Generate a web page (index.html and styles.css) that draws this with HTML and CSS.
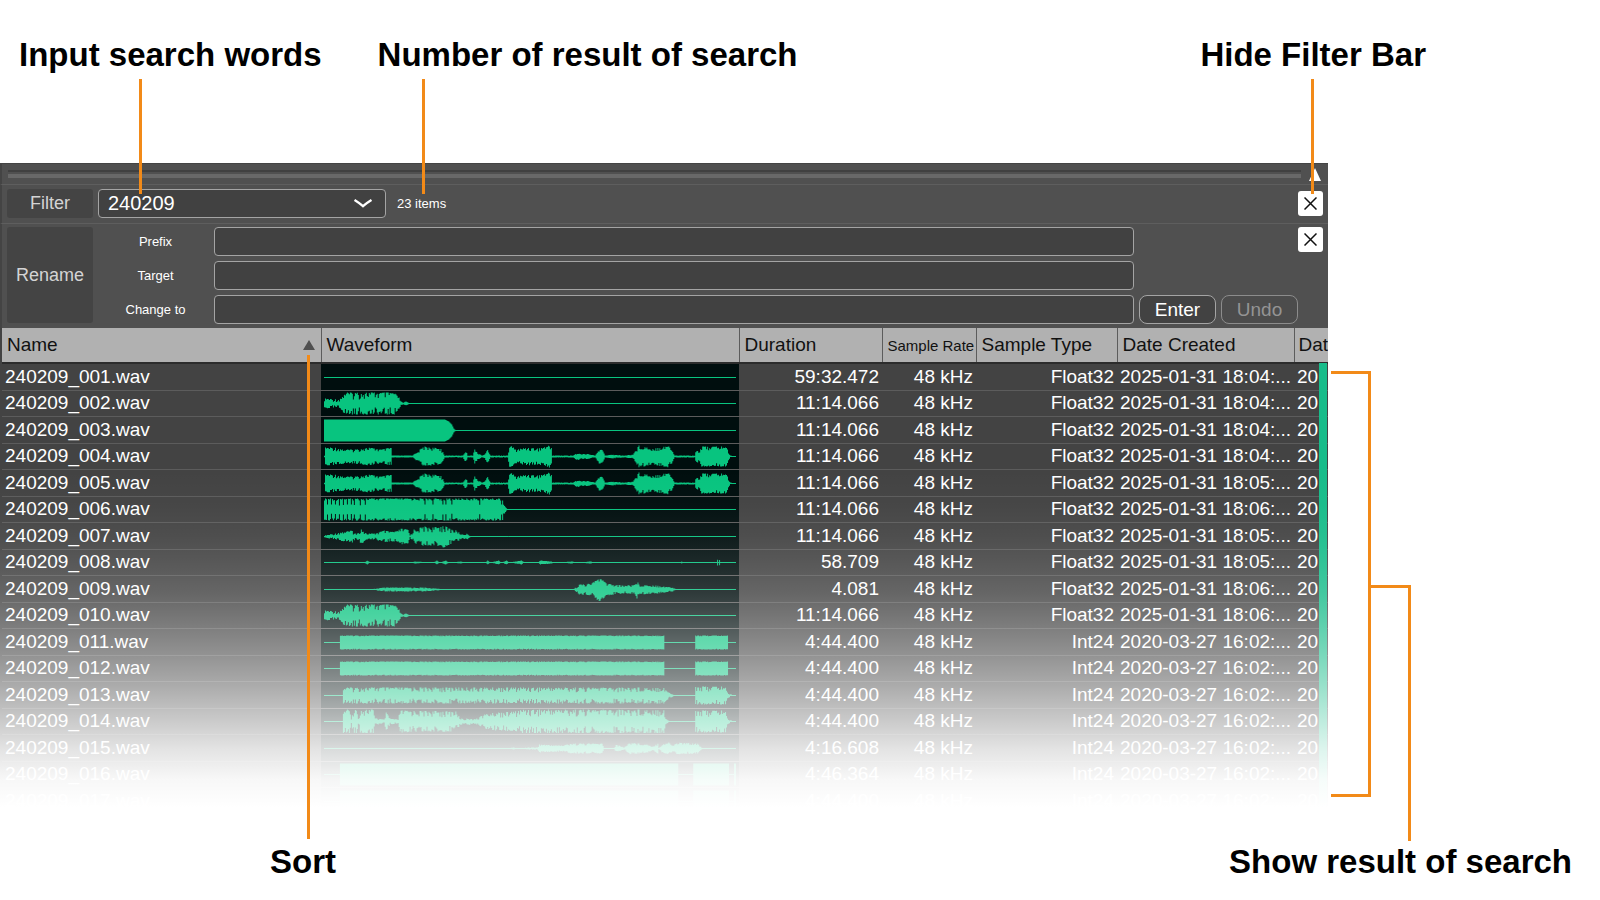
FILE: index.html
```html
<!DOCTYPE html>
<html lang="en">
<head>
  <meta charset="UTF-8">
  <title>Filter Bar</title>
  <link rel="stylesheet" href="styles.css">
</head>
<body>

  <main class="guide">

    <!-- Top callouts -->
    <div class="callouts-top">
      <div class="callout callout-input">Input search words</div>
      <div class="callout callout-count">Number of result of search</div>
      <div class="callout callout-hide">Hide Filter Bar</div>
    </div>

    <!-- Application window -->
    <section class="app">
      <div class="splitter">
        <div class="grip"></div>
        <svg class="collapse" viewBox="0 0 12 13"><path d="M6 0 L12 13 H0 Z" fill="#fff"/></svg>
      </div>

      <form class="filter-bar">
        <label class="tile" for="filter">Filter</label>
        <div class="combo">
          <input type="text" id="filter" value="240209">
          <button type="button" class="combo-btn" aria-label="Show history">
            <svg viewBox="0 0 18 9"><path d="M0.500 1 C4 3.200 6.500 5 9 7.200 C11.500 5 14 3.200 17.500 1" fill="none" stroke="#fff" stroke-width="2.400"/></svg>
          </button>
        </div>
        <output class="count" for="filter">23 items</output>
        <button type="button" class="close" aria-label="Hide filter bar">
          <svg viewBox="0 0 13 13"><path d="M0.500 0.500 L12.500 12.500 M12.500 0.500 L0.500 12.500" stroke="#111" stroke-width="1.500"/></svg>
        </button>
      </form>

      <form class="rename-bar">
        <div class="tile">Rename</div>
        <div class="fields">
          <label for="prefix">Prefix</label>
          <input type="text" id="prefix">
          <label for="target">Target</label>
          <input type="text" id="target">
          <label for="change">Change to</label>
          <input type="text" id="change">
        </div>
        <div class="actions">
          <button type="button" class="btn">Enter</button>
          <button type="button" class="btn" disabled>Undo</button>
        </div>
        <button type="button" class="close" aria-label="Hide rename bar">
          <svg viewBox="0 0 13 13"><path d="M0.500 0.500 L12.500 12.500 M12.500 0.500 L0.500 12.500" stroke="#111" stroke-width="1.500"/></svg>
        </button>
      </form>

      <div class="list">
        <table>
          <colgroup>
            <col class="col-name">
            <col>
            <col class="col-duration">
            <col class="col-rate">
            <col class="col-type">
            <col class="col-created">
            <col class="col-modified">
          </colgroup>
          <thead>
            <tr>
              <th><button type="button" class="sort">Name <svg viewBox="0 0 12 10"><path d="M6 0 L12 10 H0 Z" fill="#505050"/></svg></button></th>
              <th>Waveform</th>
              <th>Duration</th>
              <th class="narrow">Sample Rate</th>
              <th>Sample Type</th>
              <th>Date Created</th>
              <th>Dat</th>
            </tr>
          </thead>
          <tbody id="files"></tbody>
        </table>
        <div class="scrollbar"></div>
        <div class="fade"></div>
      </div>
    </section>

    <!-- Bracket beside the results -->
    <div class="results">
      <div class="bracket"></div>
      <div class="stem"></div>
    </div>

    <!-- Bottom callouts -->
    <div class="callouts-bottom">
      <div class="callout callout-sort">Sort</div>
      <div class="callout">Show result of search</div>
    </div>

  </main>

  <script src="script.js"></script>
</body>
</html>
```

FILE: styles.css
```css
* {
  box-sizing: border-box;
}

body {
  margin: 0;
  background-color: #ffffff;
  color: #000000;
  font-family: "Liberation Sans", Arial, sans-serif;
  font-size: 19px;
}

input,
button {
  font-family: inherit;
  font-size: inherit;
}

.guide {
  display: grid;
  grid-template-columns: minmax(0, 1fr) 272px;
}

/* Callouts */
.callouts-top,
.callouts-bottom {
  grid-column: 1 / -1;
  display: flex;
  font-size: 33px;
  font-weight: bold;
  line-height: 38px;
}

.callouts-top {
  gap: 56px;
  padding: 36px 174px 89px 19px;
}

.callouts-bottom {
  justify-content: space-between;
  padding: 29px 28px 0 270px;
}

.callout {
  position: relative;
  white-space: nowrap;
}

.callout-hide {
  margin-left: auto;
}

.callout-input::after,
.callout-count::after,
.callout-hide::after,
.callout-sort::after {
  content: "";
  position: absolute;
  z-index: 2;
  top: 43px;
  width: 3px;
  height: 115px;
  background-color: #f28a18;
}

.callout-input::after {
  left: 120px;
}

.callout-count::after {
  left: 44px;
}

.callout-hide::after {
  right: 112px;
}

.callout-sort::after {
  top: auto;
  bottom: 42px;
  left: 37px;
  height: 484px;
}

.results {
  display: flex;
  padding-left: 3px;
}

.bracket {
  width: 40px;
  margin: 208px 0 17px;
  border: 3px solid #f28a18;
  border-left: none;
}

.stem {
  width: 40px;
  margin: 422px 0 -27px;
  border-top: 3px solid #f28a18;
  border-right: 3px solid #f28a18;
}

/* App window */
.splitter,
.filter-bar,
.rename-bar {
  border-left: 2px solid #444444;
  background-color: #505050;
}

.splitter {
  display: flex;
  align-items: center;
  gap: 8px;
  height: 21px;
  padding: 0 7px 0 6px;
  border-top: 1px solid #444444;
}

.grip {
  flex: 1;
  height: 8px;
  border-top: 2px solid #404040;
  border-bottom: 4px solid #686868;
}

.collapse {
  width: 12px;
  height: 13px;
}

.filter-bar {
  display: flex;
  align-items: center;
  height: 39px;
  padding: 0 5px 2px;
  border-top: 1px solid #5e5e5e;
}

.tile {
  display: flex;
  align-items: center;
  justify-content: center;
  width: 86px;
  height: 29px;
  border-radius: 3px;
  background-color: #444444;
  color: #d4d4d4;
  font-size: 18px;
}

.combo {
  position: relative;
  width: 288px;
  margin-left: 5px;
}

.combo input,
.fields input {
  display: block;
  width: 100%;
  height: 29px;
  border: 1px solid #a4a4a4;
  border-radius: 4px;
  background-color: #414141;
  color: #ffffff;
  outline: none;
}

.combo input {
  padding: 0 40px 0 9px;
  font-size: 20px;
}

.combo-btn {
  position: absolute;
  top: 0;
  right: 0;
  width: 46px;
  height: 29px;
  padding: 0 14px;
  border: none;
  background: none;
}

.combo-btn svg {
  display: block;
  width: 18px;
  height: 9px;
}

.count {
  margin-left: 11px;
  color: #ffffff;
  font-size: 13px;
}

.close {
  display: flex;
  align-items: center;
  justify-content: center;
  width: 25px;
  height: 25px;
  margin-left: auto;
  padding: 0;
  border: none;
  border-radius: 3px;
  background-color: #ffffff;
}

.close svg {
  width: 13px;
  height: 13px;
}

.rename-bar {
  display: flex;
  height: 105px;
  padding: 3px 5px 4px;
  border-top: 1px solid #5e5e5e;
}

.rename-bar .tile {
  height: 96px;
}

.fields {
  flex: 1;
  display: grid;
  grid-template-columns: 113px minmax(0, 1fr);
  column-gap: 8px;
  align-content: space-between;
  align-items: center;
}

.fields label {
  padding-left: 12px;
  color: #ffffff;
  font-size: 13px;
  text-align: center;
}

.actions {
  display: flex;
  align-items: flex-end;
  gap: 5px;
  margin-left: 5px;
}

.btn {
  width: 77px;
  height: 29px;
  padding: 0;
  border: 1px solid #a4a4a4;
  border-radius: 8px;
  background-color: #424242;
  color: #ffffff;
}

.btn:disabled {
  border-color: #8c8c8c;
  background-color: #4c4c4c;
  color: #949494;
}

.rename-bar .close {
  margin-left: 0;
}

/* File list */
.list {
  position: relative;
  overflow: hidden;
  padding-left: 2px;
  background-color: #434343;
}

table {
  width: 100%;
  table-layout: fixed;
  border-collapse: collapse;
}

.col-name {
  width: 319px;
}

.col-duration {
  width: 143px;
}

.col-rate {
  width: 94px;
}

.col-type {
  width: 141px;
}

.col-created {
  width: 177px;
}

.col-modified {
  width: 34px;
}

th {
  height: 35px;
  padding: 0 0 0 5px;
  border-left: 1px solid #5c5c5c;
  border-bottom: 2px solid #2c2c2c;
  background-color: #b1b1b1;
  color: #111111;
  font-weight: normal;
  text-align: left;
  white-space: nowrap;
}

th:first-child {
  border-left: none;
}

th:last-child {
  padding-left: 4px;
}

th.narrow {
  font-size: 15px;
}

.sort {
  display: flex;
  align-items: center;
  justify-content: space-between;
  width: 100%;
  padding: 0 6px 0 0;
  border: none;
  background: none;
  color: inherit;
}

.sort svg {
  width: 12px;
  height: 10px;
}

td {
  height: 26px;
  padding: 0 3px;
  border-top: 1px solid #5c5c5c;
  color: #ffffff;
  text-align: right;
  white-space: nowrap;
}

tbody tr:nth-child(odd) td {
  height: 27px;
}

td:first-child,
td:nth-child(6),
td:nth-child(7) {
  text-align: left;
}

.wave {
  background-color: #000e0e;
}

.wave svg {
  display: block;
  width: 100%;
  height: 24px;
}

.scrollbar {
  position: absolute;
  top: 35px;
  right: 1px;
  bottom: 0;
  width: 8px;
  background-color: #18bc8a;
}

/* The list runs out into the white page */
.fade {
  position: absolute;
  top: 142px;
  right: 0;
  bottom: 0;
  left: 0;
  background: linear-gradient(to bottom,
    rgba(255, 255, 255, 0) 0%,
    rgba(255, 255, 255, 0.02) 10%,
    rgba(255, 255, 255, 0.06) 19%,
    rgba(255, 255, 255, 0.12) 28%,
    rgba(255, 255, 255, 0.19) 36%,
    rgba(255, 255, 255, 0.29) 44%,
    rgba(255, 255, 255, 0.41) 53%,
    rgba(255, 255, 255, 0.56) 63%,
    rgba(255, 255, 255, 0.72) 73%,
    rgba(255, 255, 255, 0.85) 81%,
    rgba(255, 255, 255, 0.96) 90%,
    #ffffff 98%);
}
```

FILE: script.js
```js
// Envelopes: [x, amplitude] pairs on a 414 x 24 canvas, jitter roughens the edge
const burst = {
  jitter: 0.65,
  points: [[0, 5], [2, 5], [14, 4], [18, 7], [20, 11], [70, 11], [75, 6], [77, 2], [79, 1], [82, 2], [86, 0]]
};

const speech = {
  jitter: 0.4,
  points: [[0, 1], [1, 9], [10, 9], [20, 7], [30, 7], [45, 9], [57, 7], [67, 9], [68, 1], [88, 1], [91, 3], [96, 7],
    [100, 10], [108, 9], [117, 8], [121, 1], [139, 1], [142, 6], [144, 1], [149, 1], [151, 7], [154, 4], [158, 1],
    [161, 2], [164, 7], [167, 1], [184, 1], [186, 11], [189, 10], [192, 7], [204, 9], [215, 8], [226, 11], [228, 9],
    [229, 1], [250, 1], [254, 4], [258, 2], [262, 3], [272, 1], [276, 7], [279, 7], [282, 1], [290, 2], [300, 1],
    [310, 2], [316, 11], [330, 8], [345, 11], [349, 7], [352, 1], [372, 1], [374, 8], [376, 4], [379, 10], [404, 10],
    [406, 4], [408, 1], [413, 0]]
};

const block = {
  jitter: 0.12,
  points: [[15, 0], [16, 7], [341, 7], [342, 0], [372, 0], [373, 7], [405, 7], [406, 0]]
};

const full = {
  jitter: 0,
  points: [[15, 0], [16, 11], [355, 11], [356, 0], [370, 0], [371, 11], [406, 11], [407, 0], [411, 0], [412, 11], [414, 11]]
};

const waves = [
  { jitter: 0, points: [] },
  burst,
  { jitter: 0, points: [[0, 11], [121, 11], [125, 9], [128, 6], [130, 2], [132, 0]] },
  speech,
  speech,
  { jitter: 0.2, comb: 30, points: [[0, 11], [180, 11], [181, 4], [184, 0]] },
  {
    jitter: 0.6,
    points: [[0, 1], [10, 3], [20, 5], [28, 6], [32, 2], [37, 8], [42, 3], [50, 3], [60, 6], [65, 5], [72, 5], [77, 8],
      [84, 7], [86, 1], [90, 7], [100, 10], [110, 9], [120, 11], [128, 7], [133, 6], [138, 2], [144, 3], [147, 0]]
  },
  {
    jitter: 0.2,
    points: [[40, 0], [43, 2], [46, 0], [86, 0], [91, 1], [110, 0], [113, 2], [116, 0], [122, 2], [125, 0], [137, 1],
      [140, 0], [162, 0], [164, 2], [167, 0], [175, 2], [178, 0], [183, 2], [186, 0], [198, 2], [201, 0], [214, 0],
      [217, 2], [228, 1], [232, 0], [249, 1], [252, 0], [268, 1], [271, 0], [356, 0], [359, 1], [362, 0], [394, 0],
      [395, 3], [396, 0], [397, 3], [398, 0]]
  },
  {
    jitter: 0.5,
    points: [[45, 0], [60, 2], [100, 2], [125, 0], [250, 0], [256, 5], [268, 6], [276, 12], [284, 6], [300, 4],
      [312, 5], [314, 9], [316, 5], [335, 4], [350, 2], [354, 0]]
  },
  burst,
  block,
  block,
  {
    jitter: 0.6,
    points: [[18, 0], [19, 8], [341, 8], [346, 3], [353, 0], [372, 0], [373, 9], [403, 9], [405, 3], [411, 0]]
  },
  {
    jitter: 0.6,
    points: [[18, 0], [19, 12], [25, 12], [27, 2], [29, 12], [32, 12], [34, 3], [36, 12], [49, 12], [50, 6], [53, 3],
      [60, 2], [62, 9], [66, 3], [74, 2], [76, 11], [132, 10], [136, 4], [141, 2], [145, 4], [150, 2], [160, 7],
      [172, 9], [190, 10], [200, 12], [341, 12], [343, 3], [347, 0], [372, 0], [373, 11], [403, 11], [405, 3], [411, 0]]
  },
  {
    jitter: 0.4,
    points: [[184, 0], [190, 1], [195, 0], [205, 1], [214, 1], [216, 4], [240, 3], [247, 5], [279, 5], [281, 0],
      [291, 0], [293, 4], [301, 1], [307, 6], [325, 4], [330, 2], [335, 5], [336, 0], [339, 4], [346, 6], [350, 3],
      [355, 6], [375, 5], [380, 0]]
  },
  full,
  full
];

const files = [
  ['59:32.472', 'Float32', '2025-01-31 18:04:...'],
  ['11:14.066', 'Float32', '2025-01-31 18:04:...'],
  ['11:14.066', 'Float32', '2025-01-31 18:04:...'],
  ['11:14.066', 'Float32', '2025-01-31 18:04:...'],
  ['11:14.066', 'Float32', '2025-01-31 18:05:...'],
  ['11:14.066', 'Float32', '2025-01-31 18:06:...'],
  ['11:14.066', 'Float32', '2025-01-31 18:05:...'],
  ['58.709', 'Float32', '2025-01-31 18:05:...'],
  ['4.081', 'Float32', '2025-01-31 18:06:...'],
  ['11:14.066', 'Float32', '2025-01-31 18:06:...'],
  ['4:44.400', 'Int24', '2020-03-27 16:02:...'],
  ['4:44.400', 'Int24', '2020-03-27 16:02:...'],
  ['4:44.400', 'Int24', '2020-03-27 16:02:...'],
  ['4:44.400', 'Int24', '2020-03-27 16:02:...'],
  ['4:16.608', 'Int24', '2020-03-27 16:02:...'],
  ['4:46.364', 'Int24', '2020-03-27 16:02:...'],
  ['4:44.400', 'Int24', '2020-03-27 16:02:...']
];

function noise(n) {
  const v = Math.sin(n * 12.9898) * 43758.5453;
  return v - Math.floor(v);
}

function amplitude(points, x) {
  for (let i = 1; i < points.length; i++) {
    const [x0, a0] = points[i - 1];
    const [x1, a1] = points[i];
    if (x >= x0 && x <= x1) {
      return a0 + (a1 - a0) * (x - x0) / (x1 - x0);
    }
  }
  return 0;
}

// One bar per pixel column; squared noise gives a mostly full body with notches
function wavePath(wave) {
  let d = '';
  for (let x = 0; x < 414; x++) {
    let a = amplitude(wave.points, x);
    if (wave.comb && a > 5 && (x < wave.comb ? x % 4 > 2 : noise(x) > 0.93)) {
      a = 5;
    }
    const up = Math.max(0.5, a * (1 - wave.jitter * noise(x + 1) ** 2));
    const down = Math.max(0.5, a * (1 - wave.jitter * noise(x + 500) ** 2));
    d += `M${x} ${(12.5 - up).toFixed(1)}h1V${(12.5 + down).toFixed(1)}h-1z`;
  }
  return d;
}

document.getElementById('files').innerHTML = files.map(function(file, i) {
  const number = String(i + 1).padStart(3, '0');
  return `<tr>
    <td>240209_${number}.wav</td>
    <td class="wave"><svg viewBox="0 0 414 24" preserveAspectRatio="none"><path d="${wavePath(waves[i])}" fill="#08c47f"/></svg></td>
    <td>${file[0]}</td>
    <td>48 kHz</td>
    <td>${file[1]}</td>
    <td>${file[2]}</td>
    <td>${file[2].slice(0, 2)}</td>
  </tr>`;
}).join('');
```
